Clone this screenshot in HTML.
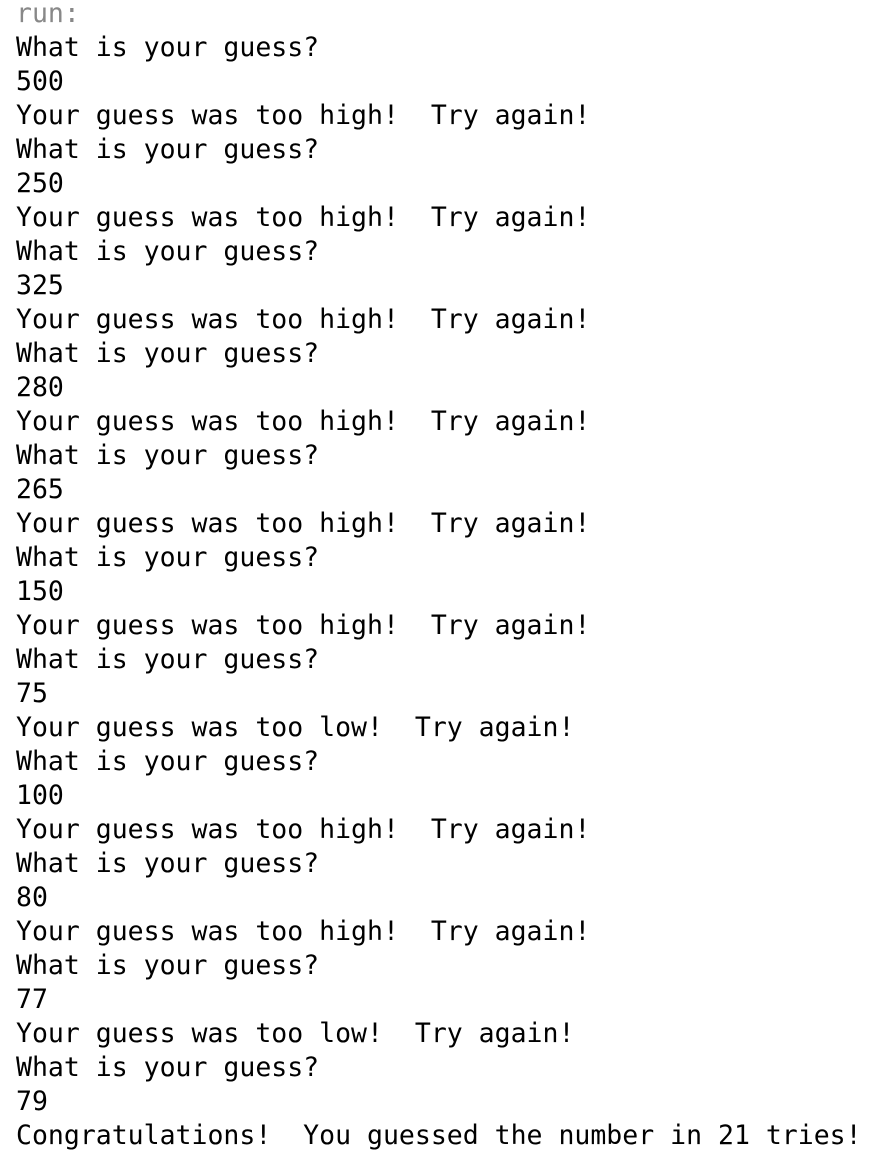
<!DOCTYPE html>
<html><head><meta charset="utf-8"><style>
html,body{margin:0;padding:0;background:#fff;width:882px;height:1158px;overflow:hidden}
pre{margin:0;position:absolute;left:16px;top:-3px;font-family:"DejaVu Sans Mono","Liberation Mono",monospace;font-size:26.5px;line-height:34px;color:#000}
.g{color:#888}
</style></head><body><pre><span class="g">run:</span>
What is your guess?
500
Your guess was too high!  Try again!
What is your guess?
250
Your guess was too high!  Try again!
What is your guess?
325
Your guess was too high!  Try again!
What is your guess?
280
Your guess was too high!  Try again!
What is your guess?
265
Your guess was too high!  Try again!
What is your guess?
150
Your guess was too high!  Try again!
What is your guess?
75
Your guess was too low!  Try again!
What is your guess?
100
Your guess was too high!  Try again!
What is your guess?
80
Your guess was too high!  Try again!
What is your guess?
77
Your guess was too low!  Try again!
What is your guess?
79
Congratulations!  You guessed the number in 21 tries!</pre></body></html>
